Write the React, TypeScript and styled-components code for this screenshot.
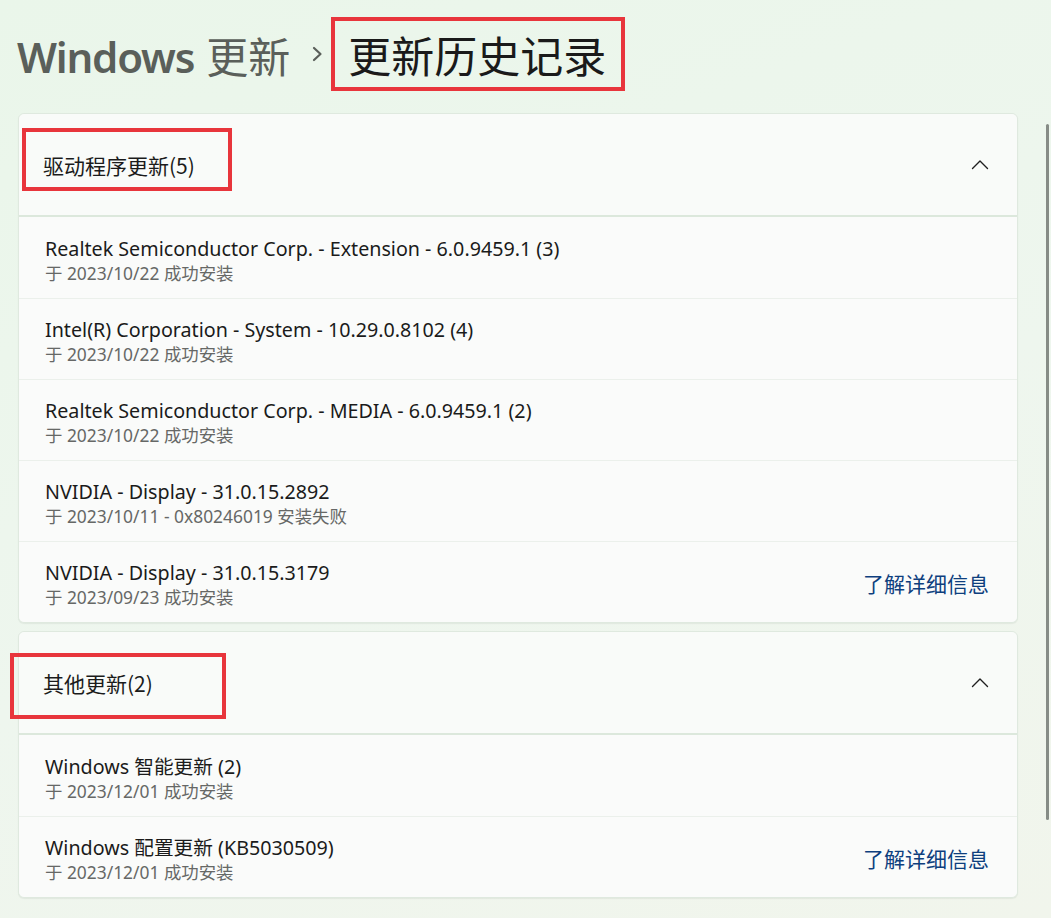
import React from "react";
import styled, { createGlobalStyle } from "styled-components";

const GlobalStyle = createGlobalStyle`
  html, body {
    margin: 0;
    padding: 0;
    background: #edf6ec;
  }
  body {
    font-family: "Noto Sans", "Noto Sans CJK SC", sans-serif;
    color: #1b1b1b;
    width: 1051px;
    height: 918px;
    overflow: hidden;
  }
`;

const Page = styled.div`
  position: relative;
  width: 1051px;
  height: 918px;
  background: linear-gradient(160deg, #eaf6ea 0%, #eef6ee 55%, #f1f5ec 100%);
`;

const Breadcrumb = styled.div`
  display: flex;
  align-items: center;
  height: 113px;
  padding-left: 17px;
  box-sizing: border-box;
  padding-bottom: 5px;
`;

const Crumb = styled.span`
  font-family: "Noto Sans", "Noto Sans CJK SC", sans-serif;
  font-size: 42px;
  font-weight: 600;
  color: #5a5f5a;
  letter-spacing: -1.2px;
`;

const CrumbCjk = styled.span`
  font-weight: 400;
  margin-left: 12px;
  letter-spacing: 0;
`;

const Chevron = styled.span`
  display: flex;
  margin: 0 8px 0 22px;
`;

const Current = styled.span`
  display: inline-flex;
  align-items: center;
  height: 74px;
  box-sizing: border-box;
  padding: 0 15px 0 13px;
  border: 4px solid #e8353c;
  font-family: "Noto Sans CJK SC", sans-serif;
  font-size: 43px;
  color: #1a1a1a;
`;

const List = styled.div`
  display: flex;
  flex-direction: column;
  gap: 8px;
  margin-left: 18px;
  width: 1000px;
`;

const Card = styled.section`
  position: relative;
  background: #f8fbf8;
  border: 1px solid #dfe9df;
  border-radius: 6px;
  box-shadow: 0 1px 1px rgba(60, 90, 60, 0.08);
`;

const Header = styled.div`
  position: relative;
  display: flex;
  align-items: center;
  justify-content: space-between;
  height: 101px;
  padding: 0 28px 0 24px;
  border-bottom: 2px solid #dce8dc;
  background: #f9fbf9;
  border-radius: 6px 6px 0 0;
`;

const HeaderTitle = styled.span`
  font-family: "Noto Sans CJK SC", sans-serif;
  font-size: 21px;
  color: #1b1b1b;
`;

const Mark = styled.span<{ $left: number; $top: number; $w: number; $h: number }>`
  position: absolute;
  left: ${(p) => p.$left}px;
  top: ${(p) => p.$top}px;
  width: ${(p) => p.$w}px;
  height: ${(p) => p.$h}px;
  box-sizing: border-box;
  border: 4px solid #e8353c;
  pointer-events: none;
`;

const Row = styled.div`
  display: flex;
  align-items: center;
  justify-content: space-between;
  height: 81px;
  box-sizing: border-box;
  padding: 5px 28px 0 26px;
  background: #fafbfa;
  & + & {
    border-top: 1px solid #ebf0eb;
  }
  &:last-child {
    border-radius: 0 0 6px 6px;
  }
`;

const RowText = styled.div`
  display: flex;
  flex-direction: column;
`;

const RowTitle = styled.span`
  font-size: 19.7px;
  line-height: 26px;
  color: #1b1b1b;
`;

const RowSub = styled.span`
  font-size: 17.4px;
  line-height: 23px;
  color: #666866;
`;

const Link = styled.a`
  font-family: "Noto Sans CJK SC", sans-serif;
  font-size: 21px;
  margin-bottom: 4px;
  color: #0e3f7e;
  text-decoration: none;
  cursor: pointer;
`;

const Scrollbar = styled.div`
  position: absolute;
  right: 2px;
  top: 124px;
  width: 3px;
  height: 696px;
  border-radius: 2px;
  background: #868c86;
`;

type Update = { title: string; sub: string; link?: boolean };

const drivers: Update[] = [
  { title: "Realtek Semiconductor Corp. - Extension - 6.0.9459.1 (3)", sub: "于 2023/10/22 成功安装" },
  { title: "Intel(R) Corporation - System - 10.29.0.8102 (4)", sub: "于 2023/10/22 成功安装" },
  { title: "Realtek Semiconductor Corp. - MEDIA - 6.0.9459.1 (2)", sub: "于 2023/10/22 成功安装" },
  { title: "NVIDIA - Display - 31.0.15.2892", sub: "于 2023/10/11 - 0x80246019 安装失败" },
  { title: "NVIDIA - Display - 31.0.15.3179", sub: "于 2023/09/23 成功安装", link: true },
];

const others: Update[] = [
  { title: "Windows 智能更新 (2)", sub: "于 2023/12/01 成功安装" },
  { title: "Windows 配置更新 (KB5030509)", sub: "于 2023/12/01 成功安装", link: true },
];

const ChevronUp = () => (
  <svg width="18" height="11" viewBox="0 0 18 11" fill="none">
    <path d="M1.5 9.5 L9 2 L16.5 9.5" stroke="#1f1f1f" strokeWidth="1.4" strokeLinecap="round" strokeLinejoin="round" />
  </svg>
);

const ChevronRight = () => (
  <svg width="11" height="16" viewBox="0 0 11 16" fill="none">
    <path d="M2 2 L8.5 8 L2 14" stroke="#5a5f5a" strokeWidth="2.2" strokeLinecap="round" strokeLinejoin="round" />
  </svg>
);

interface GroupProps {
  title: string;
  items: Update[];
  mark: { left: number; top: number; w: number; h: number };
}

const Group = ({ title, items, mark }: GroupProps) => (
  <Card>
    <Header>
      <HeaderTitle>{title}</HeaderTitle>
      <ChevronUp />
      <Mark $left={mark.left} $top={mark.top} $w={mark.w} $h={mark.h} />
    </Header>
    {items.map((it) => (
      <Row key={it.title}>
        <RowText>
          <RowTitle>{it.title}</RowTitle>
          <RowSub>{it.sub}</RowSub>
        </RowText>
        {it.link && <Link>了解详细信息</Link>}
      </Row>
    ))}
  </Card>
);

export default function App() {
  return (
    <Page>
      <GlobalStyle />
      <Breadcrumb>
        <Crumb>
          Windows<CrumbCjk>更新</CrumbCjk>
        </Crumb>
        <Chevron>
          <ChevronRight />
        </Chevron>
        <Current>更新历史记录</Current>
      </Breadcrumb>
      <List>
        <Group title="驱动程序更新(5)" items={drivers} mark={{ left: 3, top: 14, w: 210, h: 63 }} />
        <Group title="其他更新(2)" items={others} mark={{ left: -9, top: 21, w: 216, h: 66 }} />
      </List>
      <Scrollbar />
    </Page>
  );
}
